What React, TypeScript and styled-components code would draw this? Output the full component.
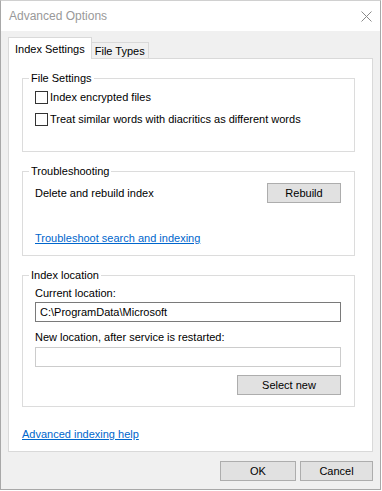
import { FC } from "react";
import styled, { createGlobalStyle } from "styled-components";

const GlobalStyle = createGlobalStyle`
    html, body {
        margin: 0;
        padding: 0;
        background-color: #ffffff;
    }
    body {
        font-family: "Liberation Sans", Arial, sans-serif;
        font-size: 11px;
        color: #000000;
    }
`;

const CloseIcon: FC = () => (
    <svg width="11" height="11" viewBox="0 0 11 11">
        <path d="M0.5 0.5 L10.5 10.5 M10.5 0.5 L0.5 10.5" stroke="#8a8a8a" strokeWidth="1" fill="none" />
    </svg>
);

export default function App() {
    return (
        <>
            <GlobalStyle />
            <Window>
                <TitleBar>
                    <Title>Advanced Options</Title>
                    <CloseIcon />
                </TitleBar>
                <Body>
                    <Tabs>
                        <Tab $active>Index Settings</Tab>
                        <Tab>File Types</Tab>
                    </Tabs>
                    <Panel>
                        <Group $bottom={21}>
                            <Legend>File Settings</Legend>
                            <CheckRow>
                                <Check type="checkbox" />
                                <span>Index encrypted files</span>
                            </CheckRow>
                            <CheckRow>
                                <Check type="checkbox" />
                                <span>Treat similar words with diacritics as different words</span>
                            </CheckRow>
                        </Group>

                        <Group $bottom={9}>
                            <Legend>Troubleshooting</Legend>
                            <ActionRow>
                                <span>Delete and rebuild index</span>
                                <Button $width={74}>Rebuild</Button>
                            </ActionRow>
                            <Link href="#" $top={27}>Troubleshoot search and indexing</Link>
                        </Group>

                        <Group $bottom={11}>
                            <Legend>Index location</Legend>
                            <FieldLabel $top={2}>Current location:</FieldLabel>
                            <PathInput value="C:\ProgramData\Microsoft" readOnly />
                            <FieldLabel $top={7}>New location, after service is restarted:</FieldLabel>
                            <PathInput $disabled value="" readOnly />
                            <SelectButton $width={104}>Select new</SelectButton>
                        </Group>

                        <Link href="#" $top={8}>Advanced indexing help</Link>
                    </Panel>
                    <Footer>
                        <Button $width={76}>OK</Button>
                        <Button $width={73}>Cancel</Button>
                    </Footer>
                </Body>
            </Window>
        </>
    );
}

const Window = styled.div`
    box-sizing: border-box;
    width: 381px;
    height: 490px;
    border: 1px solid #a8a8a8;
    border-top-color: #d0d0d0;
    background-color: #f0f0f0;
    display: flex;
    flex-direction: column;
`;

const TitleBar = styled.div`
    height: 30px;
    flex-shrink: 0;
    background-color: #ffffff;
    display: flex;
    flex-direction: row;
    align-items: center;
    justify-content: space-between;
    padding: 0 8px 0 8px;
`;

const Title = styled.div`
    font-size: 12px;
    color: #999999;
`;

const Body = styled.div`
    flex: 1;
    display: flex;
    flex-direction: column;
    padding: 6px 7px 0 7px;
    min-height: 0;
`;

const Tabs = styled.div`
    display: flex;
    flex-direction: row;
    align-items: flex-end;
    height: 22px;
    margin-bottom: -1px;
    position: relative;
    z-index: 1;
`;

const Tab = styled.div<{ $active?: boolean }>`
    box-sizing: border-box;
    display: flex;
    align-items: center;
    height: ${(p) => (p.$active ? 22 : 17)}px;
    padding: 0 ${(p) => (p.$active ? 6 : 3)}px;
    padding-top: ${(p) => (p.$active ? 0 : 1)}px;
    border: 1px solid #d9d9d9;
    border-bottom: ${(p) => (p.$active ? "none" : "1px solid #d9d9d9")};
    border-left: ${(p) => (p.$active ? "1px solid #d9d9d9" : "none")};
    background-color: ${(p) => (p.$active ? "#ffffff" : "#f0f0f0")};
    white-space: nowrap;
`;

const Panel = styled.div`
    flex: 1;
    background-color: #ffffff;
    border: 1px solid #d9d9d9;
    padding: 11px 0 0 13px;
    display: flex;
    flex-direction: column;
    align-items: flex-start;
    gap: 11px;
`;

const Group = styled.fieldset<{ $bottom: number }>`
    box-sizing: border-box;
    width: 333px;
    margin: 0;
    padding: 0 13px ${(p) => p.$bottom}px 12px;
    border: 1px solid #dcdcdc;
    display: flex;
    flex-direction: column;
    min-width: 0;
`;

const Legend = styled.legend`
    padding: 0 2px;
    margin-left: -6px;
    line-height: 16px;
    font-size: 11px;
`;

const CheckRow = styled.label`
    display: flex;
    flex-direction: row;
    align-items: center;
    gap: 2px;
    height: 22px;
    white-space: nowrap;
`;

const Check = styled.input`
    appearance: none;
    box-sizing: border-box;
    width: 13px;
    height: 13px;
    margin: 0;
    border: 1px solid #333333;
    background-color: #ffffff;
`;

const ActionRow = styled.div`
    display: flex;
    flex-direction: row;
    align-items: center;
    justify-content: space-between;
    margin-top: 4px;
    height: 20px;
`;

const Button = styled.button<{ $width: number }>`
    box-sizing: border-box;
    width: ${(p) => p.$width}px;
    height: 20px;
    padding: 0;
    border: 1px solid #adadad;
    background-color: #e1e1e1;
    font-family: "Liberation Sans", Arial, sans-serif;
    font-size: 11px;
    color: #000000;
`;

const SelectButton = styled(Button)`
    align-self: flex-end;
    margin-top: 8px;
`;

const Link = styled.a<{ $top: number }>`
    margin-top: ${(p) => p.$top}px;
    line-height: 16px;
    color: #0066cc;
    text-decoration: underline;
`;

const FieldLabel = styled.div<{ $top: number }>`
    margin-top: ${(p) => p.$top}px;
    line-height: 16px;
`;

const PathInput = styled.input<{ $disabled?: boolean }>`
    box-sizing: border-box;
    width: 100%;
    height: 20px;
    margin: ${(p) => (p.$disabled ? 2 : 1)}px 0 0 0;
    padding: 0 4px;
    border: 1px solid ${(p) => (p.$disabled ? "#cccccc" : "#7a7a7a")};
    background-color: #ffffff;
    font-family: "Liberation Sans", Arial, sans-serif;
    font-size: 11px;
    color: #000000;
    outline: none;
`;

const Footer = styled.div`
    display: flex;
    flex-direction: row;
    justify-content: flex-end;
    gap: 4px;
    padding: 9px 0 8px 0;
`;
